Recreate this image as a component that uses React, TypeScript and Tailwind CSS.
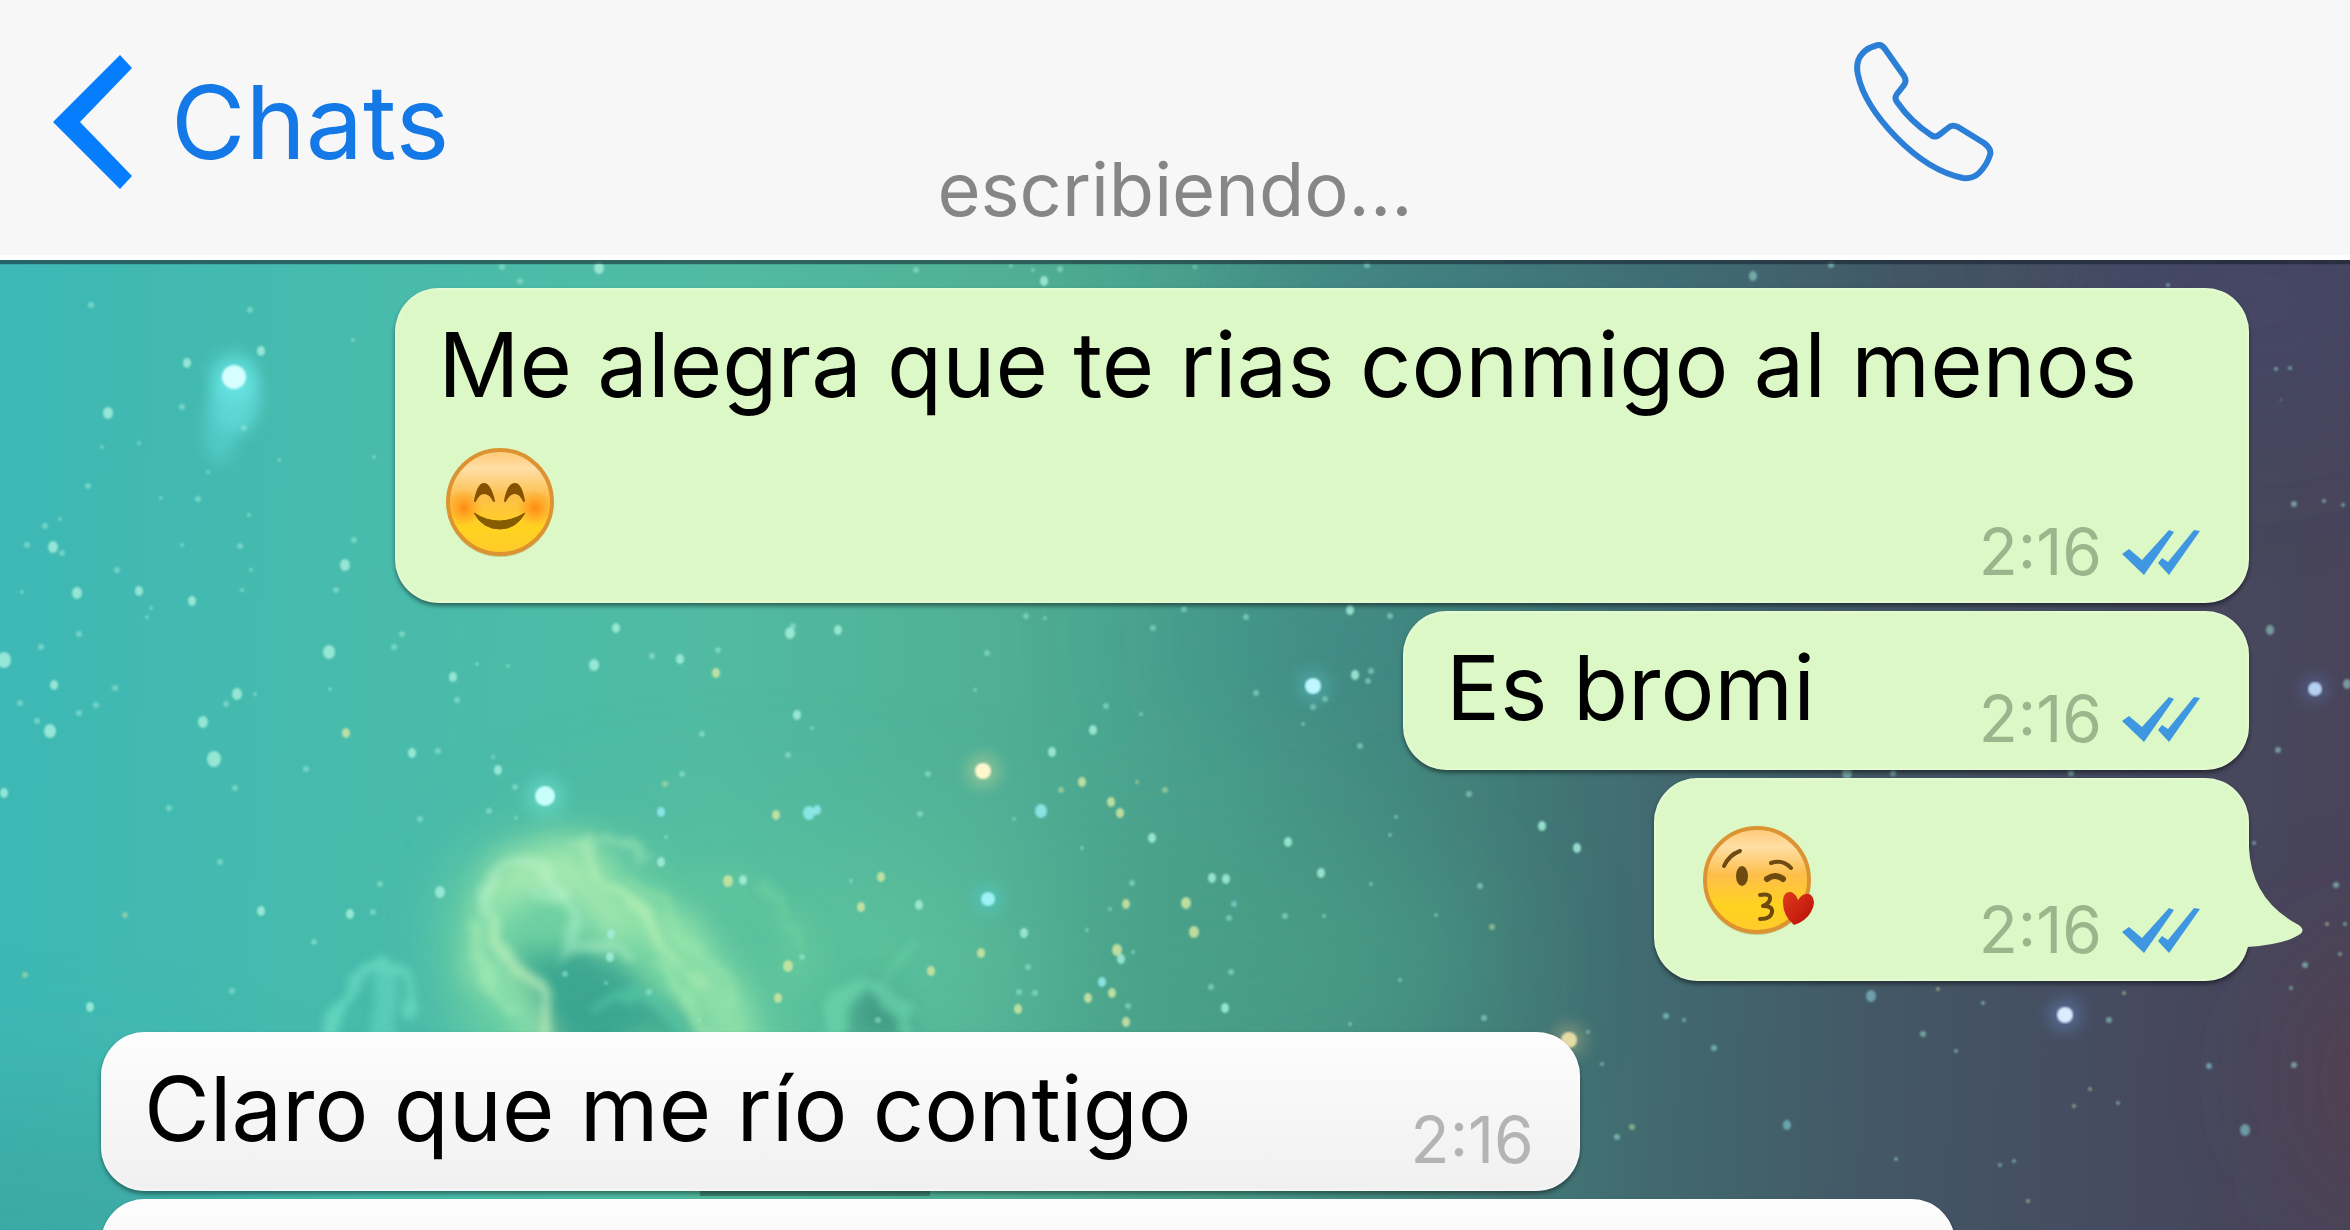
import type { ReactNode } from 'react'

type Message = {
  id: number
  content: ReactNode
  time?: string
  mine?: boolean
  tail?: boolean
}

type Star = [x: number, y: number, r: number, tone?: 'y' | 'b']

const stars: Star[] = [
  [91, 305, 4], [250, 310, 4], [353, 340, 3], [261, 351, 5], [187, 363, 5], [182, 407, 4], [502, 267, 4], [599, 268, 6],
  [108, 413, 6], [208, 472, 3], [102, 447, 3], [139, 443, 3], [244, 428, 4], [279, 460, 3], [374, 457, 3], [88, 486, 4],
  [198, 499, 4], [161, 498, 3], [249, 515, 3], [45, 526, 4], [60, 519, 3], [27, 545, 4], [53, 547, 6], [62, 553, 4],
  [240, 546, 4], [354, 540, 4], [182, 545, 3], [345, 565, 6], [117, 570, 4], [77, 593, 6], [139, 591, 5], [22, 592, 3],
  [192, 601, 5], [151, 608, 3], [147, 617, 3], [336, 590, 4], [242, 590, 3], [251, 570, 3], [79, 634, 4], [41, 647, 4],
  [4, 660, 8], [329, 652, 7], [402, 634, 4], [394, 647, 4], [54, 685, 5], [115, 688, 4], [20, 703, 4], [96, 705, 4],
  [79, 713, 4], [37, 721, 4], [50, 731, 7], [237, 694, 6], [255, 694, 3], [226, 704, 4], [203, 722, 6], [330, 689, 3],
  [214, 759, 8], [346, 733, 5, 'y'], [306, 769, 4], [412, 753, 5], [438, 751, 4], [235, 788, 4], [453, 677, 5], [457, 700, 4],
  [477, 664, 3], [508, 666, 3], [594, 665, 6], [616, 628, 5], [652, 656, 4], [680, 659, 5], [718, 650, 4], [716, 673, 5, 'y'],
  [702, 734, 4], [682, 774, 4], [665, 784, 4, 'y'], [498, 770, 5], [493, 757, 3], [515, 787, 4], [4, 793, 5],
  [169, 808, 4], [220, 862, 4], [380, 884, 4], [440, 892, 6], [350, 914, 5], [373, 912, 4], [261, 911, 5], [314, 942, 4],
  [125, 915, 4, 'y'], [25, 975, 4, 'y'], [90, 1007, 5], [232, 991, 4], [420, 819, 4], [489, 811, 4],
  [790, 633, 6], [793, 626, 4], [838, 630, 5], [1026, 616, 4], [1045, 618, 3], [987, 653, 4], [975, 690, 3], [1153, 628, 4],
  [1184, 609, 4], [1246, 617, 4], [1350, 610, 5], [1390, 616, 4], [1355, 675, 5], [1371, 671, 4], [1368, 681, 4], [1256, 693, 4],
  [1325, 699, 4], [1313, 707, 4], [1303, 724, 3], [1106, 706, 4], [1141, 714, 3], [1093, 730, 5], [797, 715, 5], [812, 728, 3],
  [788, 755, 4], [1052, 752, 5], [1360, 746, 4], [928, 774, 4], [1082, 782, 5, 'y'], [1061, 790, 4, 'y'], [1137, 782, 3, 'y'],
  [1165, 790, 4, 'y'], [1111, 802, 5, 'y'], [1120, 813, 5, 'y'], [776, 815, 5, 'y'], [809, 813, 7, 'b'], [817, 810, 5, 'b'],
  [920, 814, 4], [1041, 811, 7, 'b'], [1014, 819, 3], [1152, 838, 5], [1082, 848, 3], [1288, 842, 5], [1396, 817, 3], [1390, 835, 3],
  [1469, 794, 4], [1542, 826, 5], [1577, 848, 5], [1321, 873, 5], [1132, 883, 4], [1212, 878, 5], [1226, 879, 5], [881, 877, 5, 'y'],
  [851, 881, 3], [743, 880, 5], [861, 907, 5, 'y'], [919, 905, 5], [1126, 904, 5, 'y'], [1110, 909, 3], [1186, 903, 6, 'y'],
  [1234, 904, 4, 'b'], [1229, 918, 4], [1285, 916, 4], [1324, 916, 3], [1371, 884, 3], [1480, 886, 4], [1436, 915, 3], [1492, 927, 4, 'y'],
  [1024, 933, 5], [1194, 932, 6, 'y'], [1087, 930, 3], [981, 953, 5, 'y'], [1117, 950, 6, 'y'], [1121, 959, 5], [1133, 952, 3],
  [1028, 967, 4], [931, 971, 5, 'y'], [788, 966, 6, 'y'], [802, 957, 4], [1102, 982, 5, 'b'], [1231, 972, 4], [1211, 987, 4],
  [1112, 993, 5, 'y'], [1088, 998, 5, 'y'], [1019, 992, 4], [1035, 993, 4], [1018, 1009, 5, 'y'], [1128, 1006, 4], [1225, 1008, 5],
  [1126, 1022, 5, 'y'], [778, 998, 5, 'y'], [878, 1020, 4], [1400, 980, 3], [1484, 1018, 4], [1350, 1024, 3],
  [661, 812, 5, 'b'], [661, 862, 5], [728, 881, 6, 'y'], [743, 881, 4], [611, 934, 5], [565, 974, 4], [610, 957, 5], [649, 992, 4],
  [666, 837, 3], [516, 818, 3], [699, 1020, 3], [606, 983, 3],
  [1666, 1016, 4], [1684, 1020, 3], [1714, 1048, 4], [1871, 996, 6, 'b'], [1938, 989, 3, 'y'], [1983, 1003, 3], [2124, 993, 3, 'y'],
  [2109, 1020, 4], [1923, 1034, 4], [1956, 1051, 3], [2090, 1089, 3, 'y'], [2074, 1106, 3, 'y'], [2118, 1103, 3], [2209, 1066, 4, 'b'],
  [2294, 1065, 4], [2245, 1130, 6, 'b'], [1787, 1125, 5, 'b'], [1632, 1127, 4, 'y'], [1617, 1137, 4], [1896, 1159, 3], [2000, 1165, 3],
  [2014, 1161, 3], [2028, 1201, 3, 'y'], [1490, 1157, 3], [1602, 1064, 3], [1588, 1032, 3],
  [2276, 369, 3], [2290, 368, 3], [2281, 400, 2], [2294, 504, 4], [2324, 501, 3], [2343, 505, 3], [2270, 630, 5], [2347, 684, 5],
  [2278, 750, 4], [2254, 843, 3], [2336, 885, 4], [2327, 924, 3, 'y'], [2345, 924, 3], [2340, 954, 3], [2305, 965, 4], [2291, 988, 3],
  [1847, 773, 6], [1893, 773, 4], [2071, 773, 4], [1753, 276, 5], [1831, 265, 4], [916, 270, 4], [1044, 281, 5], [1060, 269, 4],
  [1033, 270, 3], [1011, 266, 3], [1367, 265, 4], [2168, 285, 3], [520, 281, 4], [1195, 267, 3],
]

// Larger stars that carry a soft halo around the core
const brightStars: { x: number; y: number; r: number; glow: string; core: string }[] = [
  { x: 234, y: 377, r: 12, glow: '#6ff0f0', core: '#d6ffff' },
  { x: 545, y: 796, r: 10, glow: '#6fe3d6', core: '#c8fffb' },
  { x: 983, y: 771, r: 8, glow: '#c9d79a', core: '#fff8cf' },
  { x: 1313, y: 686, r: 8, glow: '#5cb8bf', core: '#bdf7ff' },
  { x: 988, y: 899, r: 7, glow: '#55cfd4', core: '#9ff2f6' },
  { x: 2065, y: 1015, r: 8, glow: '#6a88c4', core: '#dcecff' },
  { x: 2315, y: 689, r: 7, glow: '#5a6ea4', core: '#b5d0f2' },
  { x: 1569, y: 1040, r: 8, glow: '#b0b183', core: '#e6dca6' },
]

const tones = { y: '#d0e8a2', b: '#93ecf0', w: '#a3efdb' }

function Wallpaper() {
  return (
    <svg
      className="absolute inset-0 h-full w-full"
      viewBox="0 260 2350 970"
      preserveAspectRatio="xMidYMid slice"
      aria-hidden="true"
    >
      <defs>
        <linearGradient id="sky" gradientUnits="userSpaceOnUse" x1="0" y1="745" x2="2350" y2="820">
          <stop offset="0" stopColor="#3db8b5" />
          <stop offset="0.14" stopColor="#47bbad" />
          <stop offset="0.3" stopColor="#51bba2" />
          <stop offset="0.42" stopColor="#50b096" />
          <stop offset="0.52" stopColor="#489d8a" />
          <stop offset="0.6" stopColor="#43877e" />
          <stop offset="0.7" stopColor="#416b70" />
          <stop offset="0.8" stopColor="#435866" />
          <stop offset="0.91" stopColor="#454a60" />
          <stop offset="1" stopColor="#49445a" />
        </linearGradient>
        <filter id="blur1" x="-5%" y="-5%" width="110%" height="110%">
          <feGaussianBlur stdDeviation="1" />
        </filter>
        <filter id="blur8" x="-100%" y="-100%" width="300%" height="300%">
          <feGaussianBlur stdDeviation="8" />
        </filter>
        <filter id="blur28" x="-80%" y="-80%" width="260%" height="260%">
          <feGaussianBlur stdDeviation="28" />
        </filter>
        <filter id="blur70" x="-80%" y="-80%" width="260%" height="260%">
          <feGaussianBlur stdDeviation="70" />
        </filter>
        <filter id="cloud" x="-50%" y="-50%" width="200%" height="200%">
          <feTurbulence type="fractalNoise" baseFrequency="0.012" numOctaves="4" seed="4" />
          <feDisplacementMap in="SourceGraphic" scale="70" xChannelSelector="R" yChannelSelector="G" />
          <feGaussianBlur stdDeviation="13" />
        </filter>
        <filter id="wisp" x="-50%" y="-50%" width="200%" height="200%">
          <feTurbulence type="fractalNoise" baseFrequency="0.02" numOctaves="4" seed="9" />
          <feDisplacementMap in="SourceGraphic" scale="40" xChannelSelector="R" yChannelSelector="G" />
          <feGaussianBlur stdDeviation="4" />
        </filter>
      </defs>
      <rect x="0" y="260" width="2350" height="970" fill="url(#sky)" />

      {/* Broad colour clouds */}
      <g filter="url(#blur70)">
        <ellipse cx="1330" cy="640" rx="170" ry="60" fill="#378489" opacity="0.5" />
        <ellipse cx="1500" cy="300" rx="300" ry="60" fill="#3d7383" opacity="0.6" />
        <ellipse cx="780" cy="960" rx="300" ry="110" fill="#5fc69d" opacity="0.7" />
        <ellipse cx="1250" cy="960" rx="240" ry="100" fill="#489f86" opacity="0.7" />
        <ellipse cx="0" cy="1230" rx="300" ry="120" fill="#3da39e" opacity="0.7" />
        <ellipse cx="2400" cy="1080" rx="100" ry="120" fill="#593c4a" opacity="0.75" />
        <ellipse cx="2250" cy="300" rx="170" ry="120" fill="#41466a" opacity="0.7" />
      </g>

      {/* Haze below the brightest star */}
      <ellipse cx="236" cy="400" rx="24" ry="34" fill="#6fe8ea" opacity="0.6" filter="url(#blur8)" />
      <ellipse cx="220" cy="430" rx="16" ry="34" fill="#60d8dc" opacity="0.5" filter="url(#blur8)" />

      {/* Nebula */}
      <path d="M455 880 Q520 810 610 850 Q690 890 790 1060 L480 1060 Q430 960 455 880 Z" fill="#7fdba4" opacity="0.65" filter="url(#blur28)" />
      <g filter="url(#cloud)" fill="none" strokeLinecap="round">
        <path d="M500 890 Q560 845 620 890 Q680 940 740 1050" stroke="#a0e8ac" strokeWidth="52" opacity="0.65" />
        <path d="M490 895 Q475 950 515 990 Q540 1010 545 1050" stroke="#a6ebb2" strokeWidth="30" opacity="0.65" />
        <path d="M520 880 Q580 870 620 920" stroke="#bff2ba" strokeWidth="34" opacity="0.55" />
        <path d="M530 960 Q580 930 620 970 Q670 1000 700 1050 L560 1050 Q550 990 530 960 Z" fill="#339f8d" stroke="none" opacity="0.85" />
        <path d="M845 1050 Q850 990 880 995 Q910 1010 910 1050 Z" fill="#3b9380" stroke="none" opacity="0.8" />
        <path d="M720 870 Q780 900 810 960" stroke="#78d8a2" strokeWidth="18" opacity="0.45" />
      </g>
      <g filter="url(#wisp)" fill="none" strokeLinecap="round">
        <path d="M335 1050 Q342 975 385 970 Q425 975 412 1012" stroke="#74e6cb" strokeWidth="12" opacity="0.6" />
        <path d="M385 985 Q392 1010 378 1046" stroke="#74e6cb" strokeWidth="22" opacity="0.4" />
        <path d="M482 915 Q485 868 530 866 Q560 880 556 900" stroke="#bff5cb" strokeWidth="9" opacity="0.55" />
        <path d="M575 835 Q600 875 640 905 Q660 930 680 970" stroke="#c0f3ba" strokeWidth="10" opacity="0.5" />
        <path d="M580 842 Q620 832 650 856" stroke="#b0f0bd" strokeWidth="6" opacity="0.5" />
        <path d="M490 925 Q500 965 535 985 Q548 1000 552 1050" stroke="#c5f5bb" strokeWidth="14" opacity="0.65" />
        <path d="M470 930 Q480 980 510 1010" stroke="#a9efb4" strokeWidth="9" opacity="0.5" />
        <path d="M600 1010 Q650 965 700 1046" stroke="#57c9a8" strokeWidth="10" opacity="0.6" />
        <path d="M540 890 Q580 920 572 950 Q600 935 622 965" stroke="#b0f3ca" strokeWidth="12" opacity="0.5" />
        <path d="M600 870 Q660 920 700 990" stroke="#b5f0b4" strokeWidth="9" opacity="0.45" />
        <path d="M640 880 Q700 940 730 1010" stroke="#9ae8ac" strokeWidth="9" opacity="0.45" />
        <path d="M825 1046 Q845 985 872 980 Q895 982 915 1046" stroke="#70dab0" strokeWidth="10" opacity="0.6" />
        <path d="M872 984 Q895 975 915 945" stroke="#70dab0" strokeWidth="6" opacity="0.55" />
        <path d="M660 970 Q690 990 720 1046" stroke="#a8efb0" strokeWidth="12" opacity="0.55" />
        <path d="M760 880 Q790 910 800 950" stroke="#7cdba4" strokeWidth="7" opacity="0.4" />
      </g>

      {/* Strip of dark cloud showing between the two incoming bubbles */}
      <rect x="700" y="1188" width="230" height="8" fill="#274f4b" opacity="0.5" />

      <g filter="url(#blur1)">
        {stars.map(([x, y, r, tone], i) => (
          <ellipse key={i} cx={x} cy={y} rx={r > 4 ? r - 1 : r - 1} ry={r > 4 ? r : r - 1} fill={tones[tone ?? 'w']} opacity={x > 1580 ? 0.5 : r > 4 ? 0.85 : 0.5} />
        ))}
      </g>
      {brightStars.map(({ x, y, r, glow, core }) => (
        <g key={x}>
          <circle cx={x} cy={y} r={r * 2} fill={glow} opacity="0.5" filter="url(#blur8)" />
          <circle cx={x} cy={y} r={r} fill={core} filter="url(#blur1)" />
        </g>
      ))}
    </svg>
  )
}

function FaceGradient({ id }: { id: string }) {
  return (
    <linearGradient id={id} x1="0" y1="0" x2="0" y2="1">
      <stop offset="0" stopColor="#ffc873" />
      <stop offset="0.18" stopColor="#ffdfa6" />
      <stop offset="0.45" stopColor="#fdbe4a" />
      <stop offset="0.75" stopColor="#ffd21f" />
      <stop offset="1" stopColor="#ffcb2b" />
    </linearGradient>
  )
}

function SmileEmoji() {
  return (
    <svg className="mt-[26px] mb-[18px] ml-[6px] inline-block h-[112px] w-[112px] align-top" viewBox="0 0 112 112" role="img" aria-label="😊">
      <defs>
        <FaceGradient id="smile-face" />
        <radialGradient id="blush">
          <stop offset="0" stopColor="#ff8a12" />
          <stop offset="1" stopColor="#ff9a1a" stopOpacity="0" />
        </radialGradient>
      </defs>
      <circle cx="56" cy="58" r="53" fill="#8c8340" opacity="0.35" />
      <circle cx="56" cy="56" r="52" fill="url(#smile-face)" stroke="#dc9433" strokeWidth="4" />
      <circle cx="20" cy="62" r="18" fill="url(#blush)" />
      <circle cx="91" cy="62" r="18" fill="url(#blush)" />
      <path d="M31 55 Q34 38 40 38 Q46 38 50 55 Q46 47 40 47 Q35 47 31 55 Z" fill="#855200" stroke="#855200" strokeWidth="2" strokeLinejoin="round" />
      <path d="M61 55 Q64 38 71 38 Q77 38 80 55 Q76 47 71 47 Q65 47 61 55 Z" fill="#855200" stroke="#855200" strokeWidth="2" strokeLinejoin="round" />
      <path d="M30 67 Q55 83 81 67 Q72 83 56 83 Q39 83 30 67 Z" fill="#855c00" stroke="#855c00" strokeWidth="1" strokeLinejoin="round" />
    </svg>
  )
}

function KissEmoji() {
  return (
    <svg className="mt-[25px] mb-[18px] ml-[6px] inline-block h-[112px] w-[112px] align-top" viewBox="0 0 112 112" role="img" aria-label="😘">
      <defs>
        <FaceGradient id="kiss-face" />
        <linearGradient id="heart" x1="0" y1="0" x2="1" y2="1">
          <stop offset="0" stopColor="#e23a1c" />
          <stop offset="1" stopColor="#b50f08" />
        </linearGradient>
      </defs>
      <circle cx="54" cy="58" r="53" fill="#8c8340" opacity="0.35" />
      <circle cx="54" cy="56" r="52" fill="url(#kiss-face)" stroke="#dc9433" strokeWidth="4" />
      <g fill="none" stroke="#6d4a10" strokeLinecap="round">
        <path d="M21 42 Q26 31 37 27" strokeWidth="4" />
        <path d="M68 39 Q80 35 88 44" strokeWidth="4" />
        <path d="M64 55 Q72 49 80 55" strokeWidth="6" />
        <path d="M57 71 Q68 69 67 75 Q66 80 60 82 Q70 82 69 88 Q68 95 57 95" strokeWidth="4" strokeLinejoin="round" />
      </g>
      <ellipse cx="39" cy="52" rx="6" ry="10" fill="#6d4a10" />
      <path d="M91 101 Q79 91 80 76 Q81 67 88 68 Q93 70 95 76 Q101 67 108 71 Q114 77 108 88 Q103 97 91 101 Z" fill="url(#heart)" />
    </svg>
  )
}

function DoubleCheck() {
  return (
    <svg className="mr-[3px] h-[46px] w-[78px]" viewBox="0 0 78 46" fill="#3f97e2" role="img" aria-label="Leído">
      <path d="M0 25 L7 20 L20 31 L47 1 L52 3 L22 46 Z" />
      <path d="M36 34 L40 29 L46 33 L72 1 L78 2 L47 46 Z" />
    </svg>
  )
}

function Bubble({ content, time, mine, tail }: Message) {
  return (
    <li className={`flex ${mine ? 'justify-end' : 'justify-start'}`}>
      <div
        className={`relative grid min-h-[159px] max-w-[86.3%] rounded-[44px] pt-[21px] pr-[46px] pb-[19px] pl-[43px] ${
          mine
            ? 'bg-[#dcf8c6] shadow-[0_3px_4px_rgba(0,0,0,0.45),inset_0_0_4px_#f2ffe6]'
            : 'bg-linear-to-b from-[#fdfdfd] to-[#f0f0f0] shadow-[0_3px_4px_rgba(0,0,0,0.4),inset_0_0_4px_#ffffff]'
        } ${time ? '' : 'w-full'}`}
      >
        {tail && (
          <svg className="absolute right-[-56px] bottom-[28px] h-[106px] w-[60px]" viewBox="0 0 60 106" aria-hidden="true">
            <path d="M0 0 H4 Q6 52 52 77 Q64 84 50 90 Q34 98 2 100 L0 100 Z" fill="#dcf8c6" />
          </svg>
        )}
        <p className="col-start-1 row-start-1 pb-[8px] text-[90px] leading-[111px] text-black">
          {content}
          {/* Keeps the last line clear of the time stamp */}
          <span className={`inline-block ${mine ? 'w-[388px]' : 'w-[342px]'}`} />
        </p>
        {time && (
          <div className="col-start-1 row-start-1 flex items-baseline gap-[20px] self-end justify-self-end">
            <time className={`text-[64px] leading-[64px] ${mine ? 'text-[#9db58d]' : 'text-[#b4b4b4]'}`}>{time}</time>
            {mine && <DoubleCheck />}
          </div>
        )}
      </div>
    </li>
  )
}

const sent: Message[] = [
  { id: 1, content: <>Me alegra que te rias conmigo al menos <SmileEmoji /></>, time: '2:16', mine: true },
  { id: 2, content: 'Es bromi', time: '2:16', mine: true },
  { id: 3, content: <KissEmoji />, time: '2:16', mine: true, tail: true },
]

const received: Message[] = [
  { id: 4, content: 'Claro que me río contigo', time: '2:16' },
  { id: 5, content: null },
]

function Header() {
  return (
    <header className="relative z-10 grid h-[260px] shrink-0 grid-cols-[1fr_auto_1fr] items-center border-b-[5px] border-white bg-[#f7f7f7] pb-[11px] shadow-[0_4px_1px_rgba(20,30,40,0.55)]">
      <button className="flex items-center gap-[38px] pl-[53px] text-[102px] leading-[120px] text-[#1479e6]">
        <svg className="h-[134px] w-[80px]" viewBox="0 0 80 134" fill="#067dfc" aria-hidden="true">
          <path d="M0 67 L67 0 L79 13 L27 67 L79 121 L67 134 Z" />
        </svg>
        Chats
      </button>
      <p className="self-end text-[74px] leading-[110px] text-[#868686]">escribiendo...</p>
      <button className="mr-[356px] mb-[20px] justify-self-end" aria-label="Llamar">
        <svg className="h-[140px] w-[140px]" viewBox="0 0 140 140" fill="none" stroke="#2b7fd6" strokeWidth="6" strokeLinejoin="round">
          <path d="M21 4 Q27 1 31 7 L50 34 Q53 39 50 43 L43 52 Q40 56 43 60 Q57 80 77 93 Q81 96 85 93 L94 86 Q98 82 104 85 L130 101 Q138 107 136 113 Q133 123 125 131 Q119 137 109 136 Q75 129 42 95 Q10 62 4 33 Q1 20 8 12 Q13 6 21 4 Z" />
        </svg>
      </button>
    </header>
  )
}

export default function App() {
  return (
    <div className="flex h-screen flex-col overflow-hidden font-['Inter',sans-serif]">
      <Header />
      <main className="relative flex-1 overflow-hidden">
        <Wallpaper />
        <div className="relative flex flex-col gap-[51px] px-[101px] pt-[28px]">
          <ul className="flex flex-col gap-[8px]">
            {sent.map((m) => (
              <Bubble key={m.id} {...m} />
            ))}
          </ul>
          <ul className="flex flex-col gap-[8px]">
            {received.map((m) => (
              <Bubble key={m.id} {...m} />
            ))}
          </ul>
        </div>
      </main>
    </div>
  )
}
